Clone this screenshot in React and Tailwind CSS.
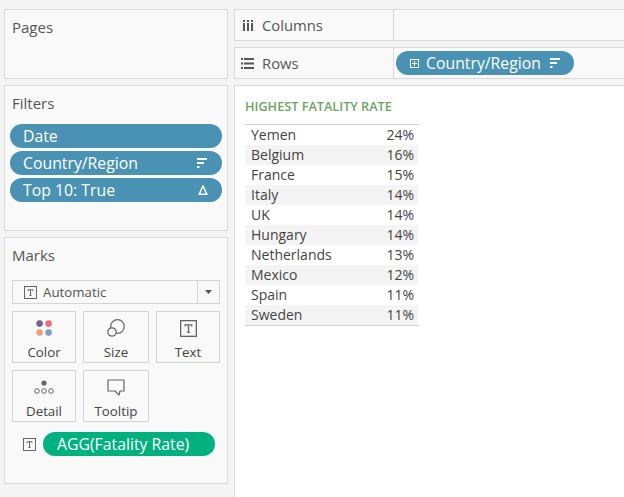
const font = { fontFamily: '"Open Sans", sans-serif' };

const rows = [
  ["Yemen", "24%"], ["Belgium", "16%"], ["France", "15%"], ["Italy", "14%"], ["UK", "14%"],
  ["Hungary", "14%"], ["Netherlands", "13%"], ["Mexico", "12%"], ["Spain", "11%"], ["Sweden", "11%"],
];

function SortIcon() {
  return (
    <svg width="11" height="10" viewBox="0 0 11 10" fill="#fff">
      <rect x="0" y="0" width="10" height="2" />
      <rect x="0" y="4" width="7" height="2" />
      <rect x="0" y="8" width="2.5" height="2" />
    </svg>
  );
}

function TIcon({ size = 13, color = "#666" }) {
  return (
    <svg width={size} height={size} viewBox="0 0 13 13" fill="none">
      <rect x="0.5" y="0.5" width="12" height="12" stroke={color} />
      <path d="M4 5V3.8H9V5M6.5 3.8V9.4M5.4 9.4H7.6" stroke={color} />
    </svg>
  );
}

function Pill({ children, icon }) {
  return (
    <div className="h-6 rounded-full bg-[#4a92b3] text-white text-[15.8px] flex items-center justify-between pl-[13px] pr-[14px]">
      <span className="leading-none mt-[1px]">{children}</span>
      {icon}
    </div>
  );
}

function Card({ label, icon }) {
  return (
    <div className="h-[52px] border border-[#d4d4d4] flex flex-col items-center text-[13.3px] text-[#444]">
      <div className="h-[18px] mt-[7px] flex items-center justify-center">{icon}</div>
      <div className="leading-[18px] mt-[6px]">{label}</div>
    </div>
  );
}

export default function App() {
  return (
    <div style={font} className="w-[624px] h-[497px] overflow-hidden bg-[#f4f4f4] flex pl-1 pt-[9px] gap-[6px] text-[#555]">
      <div className="w-[224px] shrink-0 flex flex-col gap-[6px]">
        <div className="h-[70px] border border-[#d9d9d9] bg-[#f9f9f9] px-[7px] pt-[7px] text-[15px] leading-5">Pages</div>
        <div className="h-[146px] border border-[#d9d9d9] bg-[#f9f9f9] px-[5px] pt-[7px]">
          <div className="px-[2px] text-[15px] leading-5 mb-[11px]">Filters</div>
          <div className="flex flex-col gap-[3px]">
            <Pill>Date</Pill>
            <Pill icon={<SortIcon />}>Country/Region</Pill>
            <Pill icon={
              <svg width="10" height="10" viewBox="0 0 10 10" fill="none" stroke="#fff" strokeWidth="1.5"><path d="M5 1L1.2 9.2H8.8Z" /></svg>
            }>Top 10: True</Pill>
          </div>
        </div>
        <div className="h-[247px] border border-[#d9d9d9] bg-[#f9f9f9] pl-[7px] pr-[7px] pt-[7px]">
          <div className="text-[15px] leading-5 mb-[15px]">Marks</div>
          <div className="h-6 w-[208px] border border-[#d4d4d4] flex items-center text-[13.3px]">
            <div className="flex-1 flex items-center pl-[11px] gap-[6px]">
              <TIcon />
              <span className="mt-[1px]">Automatic</span>
            </div>
            <div className="w-[22px] h-full border-l border-[#d4d4d4] flex items-center justify-center">
              <svg width="7" height="4" viewBox="0 0 7 4" fill="#555"><path d="M0 0H7L3.5 4Z" /></svg>
            </div>
          </div>
          <div className="mt-[7px] grid grid-cols-[64px_66px_64px] gap-[7px] w-[208px]">
            <Card label="Color" icon={
              <svg width="17" height="17" viewBox="0 0 17 17">
                <circle cx="3.6" cy="3.6" r="3.3" fill="#7b5f94" />
                <circle cx="12.6" cy="3.6" r="3.3" fill="#ec6d7e" />
                <circle cx="3.6" cy="12.6" r="3.3" fill="#f0a17a" />
                <circle cx="12.6" cy="12.6" r="3.3" fill="#7f9fca" />
              </svg>
            } />
            <Card label="Size" icon={
              <svg width="18" height="18" viewBox="0 0 18 18" fill="none" stroke="#666" strokeWidth="1.2">
                <circle cx="10.5" cy="7.5" r="6.8" />
                <circle cx="5" cy="13" r="4.2" fill="#f9f9f9" />
              </svg>
            } />
            <Card label="Text" icon={<TIcon size={17} />} />
            <Card label="Detail" icon={
              <svg width="20" height="15" viewBox="0 0 20 15" fill="none" stroke="#666">
                <circle cx="10" cy="3" r="2.6" fill="#666" stroke="none" />
                <circle cx="3" cy="11" r="2.3" />
                <circle cx="10" cy="11" r="2.3" />
                <circle cx="17" cy="11" r="2.3" />
              </svg>
            } />
            <Card label="Tooltip" icon={
              <svg width="18" height="17" viewBox="0 0 18 17" fill="none" stroke="#666" strokeWidth="1.2">
                <path d="M1 1H17V12H13L12 16L8 12H1Z" strokeLinejoin="round" />
              </svg>
            } />
          </div>
          <div className="mt-[10px] flex items-center pl-[11px] gap-[7px]">
            <TIcon />
            <div className="w-[172px] h-6 rounded-full bg-[#00b180] text-white text-[15.8px] flex items-center pl-[14px]">
              <span className="leading-none mt-[1px]">AGG(Fatality Rate)</span>
            </div>
          </div>
        </div>
      </div>
      <div className="flex-1 flex flex-col gap-[6px] min-w-0">
        <div className="h-8 border-y border-l border-[#d9d9d9] bg-[#f9f9f9] flex">
          <div className="w-[159px] shrink-0 border-r border-[#d9d9d9] flex items-center text-[14.8px]">
            <svg className="ml-[8px] mr-[8px]" width="11" height="11" viewBox="0 0 11 11" fill="#555">
              <rect x="0" y="0" width="2" height="2" /><rect x="4" y="0" width="2" height="2" /><rect x="8" y="0" width="2" height="2" />
              <rect x="0" y="3" width="2" height="8" /><rect x="4" y="3" width="2" height="8" /><rect x="8" y="3" width="2" height="8" />
            </svg>
            <span className="mt-[1px]">Columns</span>
          </div>
        </div>
        <div className="h-8 border-y border-l border-[#d9d9d9] bg-[#f9f9f9] flex">
          <div className="w-[159px] shrink-0 border-r border-[#d9d9d9] flex items-center text-[14.8px]">
            <svg className="ml-[6px] mr-[8px]" width="13" height="11" viewBox="0 0 13 11" fill="#555">
              <rect x="0" y="0" width="2" height="2" /><rect x="3" y="0" width="10" height="2" />
              <rect x="0" y="4.5" width="2" height="2" /><rect x="3" y="4.5" width="10" height="2" />
              <rect x="0" y="9" width="2" height="2" /><rect x="3" y="9" width="10" height="2" />
            </svg>
            <span className="mt-[1px]">Rows</span>
          </div>
          <div className="ml-[2px] self-center w-[178px] h-6 rounded-full bg-[#4a92b3] text-white text-[15.8px] flex items-center pl-[14px]">
            <svg className="mr-[7px]" width="9" height="9" viewBox="0 0 9 9" fill="none" stroke="#fff"><rect x="0.5" y="0.5" width="8" height="8" /><path d="M2 4.5H7M4.5 2V7" /></svg>
            <span className="leading-none mt-[1px]">Country/Region</span>
            <span className="ml-[9px] flex"><SortIcon /></span>
          </div>
        </div>
        <div className="flex-1 bg-white border-t border-l border-[#d9d9d9] pl-[10px] pt-[12px]">
          <div className="text-[12.7px] font-semibold leading-4 text-[#6aa560]">HIGHEST FATALITY RATE</div>
          <div className="mt-[10px] w-[174px] border-y border-[#cfcfcf]">
            {rows.map(([c, v], i) => (
              <div key={c} className={`h-5 flex items-start justify-between pl-[6px] pr-[4px] mr-[1px] text-[14px] leading-[19px] text-[#444] ${i % 2 ? "bg-[#f4f4f4]" : "bg-white"}`}>
                <span>{c}</span>
                <span>{v}</span>
              </div>
            ))}
          </div>
        </div>
      </div>
    </div>
  );
}
